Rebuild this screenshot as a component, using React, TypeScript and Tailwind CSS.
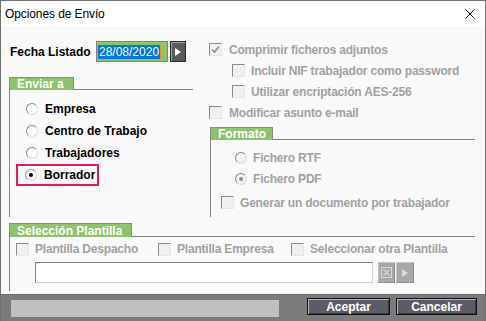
import React from 'react';

const GRAY = 'text-[#a0a0a0] tracking-[-0.2px]';

function Radio({ checked = false, disabled = false }: { checked?: boolean; disabled?: boolean }) {
  return (
    <span
      className={`flex h-[12px] w-[12px] shrink-0 items-center justify-center rounded-full border border-[#8a8a8a] border-b-[#dcdcdc] border-r-[#dcdcdc] ${
        disabled ? 'bg-[#f0f0f0]' : 'bg-white'
      }`}
    >
      {checked && <span className={`h-[4px] w-[4px] rounded-full ${disabled ? 'bg-[#909090]' : 'bg-black'}`} />}
    </span>
  );
}

function Check({ checked = false }: { checked?: boolean }) {
  return (
    <span className="flex h-[13px] w-[13px] shrink-0 items-center justify-center border border-[#8a8a8a] border-b-[#e6e6e6] border-r-[#e6e6e6] bg-[#f0f0f0]">
      {checked && (
        <svg width="9" height="9" viewBox="0 0 9 9">
          <path d="M1 4.5 L3.5 7 L8 1.5" fill="none" stroke="#8a8a8a" strokeWidth="1.6" />
        </svg>
      )}
    </span>
  );
}

function Tab({ label, w, h }: { label: string; w: string; h: string }) {
  return (
    <div className={`flex ${h}`}>
      <div
        className={`${w} flex items-center border border-b-0 border-[#8a8a8a] bg-[#8bc46b] pl-[7px] font-bold leading-none text-white`}
      >
        {label}
      </div>
      <div className="flex-1 border-b border-[#808080]" />
    </div>
  );
}

export default function App() {
  return (
    <div className="h-[321px] w-[486px] overflow-hidden bg-[#f9f9f9] font-['Liberation_Sans',Arial,sans-serif] text-[12px]">
      <div className="flex h-full w-full flex-col border-l border-r border-t border-[#707070]">
        {/* Title bar */}
        <div className="flex h-[25px] shrink-0 items-center justify-between bg-white pl-[4px] pr-[10px]">
          <span className="text-[12px] tracking-[-0.1px] text-black">Opciones de Envío</span>
          <svg width="10" height="10" viewBox="0 0 10 10">
            <path d="M0.5 0.5 L9.5 9.5 M9.5 0.5 L0.5 9.5" stroke="#111" strokeWidth="1" />
          </svg>
        </div>

        {/* Body */}
        <div className="flex flex-1 flex-col pl-[8px]">
          <div className="flex h-[191px]">
            {/* Left column */}
            <div className="flex w-[184px] flex-col pt-[15px]">
              <div className="flex h-[21px] items-center pl-[1px]">
                <span className="w-[86px] font-bold text-black">Fecha Listado</span>
                <div className="flex h-[21px] w-[72px] items-center border border-[#808080] bg-[#8bc46b] pl-[1px]">
                  <span className="bg-[#0078d7] px-[1px] leading-[14px] text-white">28/08/2020</span>
                  <span className="h-[14px] w-[1px] bg-[#ff8c00]" />
                </div>
                <div className="ml-[2px] flex h-[21px] w-[16px] items-center justify-center border border-[#2a2a2a] bg-[#5a5a5e] shadow-[inset_1px_1px_0_#a0a0a4]">
                  <svg width="6" height="8" viewBox="0 0 6 8">
                    <path d="M0 0 L6 4 L0 8 Z" fill="#fff" />
                  </svg>
                </div>
              </div>

              <div className="mt-[15px] flex flex-1 flex-col">
                <Tab label="Enviar a" w="w-[65px]" h="h-[13px]" />
                <div className="flex flex-1 flex-col border-l border-[#808080] pt-[8px]">
                  {['Empresa', 'Centro de Trabajo', 'Trabajadores'].map((t) => (
                    <div key={t} className="flex h-[22px] items-center gap-[7px] pl-[16px]">
                      <Radio />
                      <span className="font-bold text-black">{t}</span>
                    </div>
                  ))}
                  <div className="flex h-[22px] items-center pl-[6px]">
                    <div className="flex h-[22px] w-[83px] items-center gap-[7px] border-2 border-[#e8175d] pl-[7px]">
                      <Radio checked />
                      <span className="font-bold text-black">Borrador</span>
                    </div>
                  </div>
                </div>
              </div>
            </div>

            {/* Right column */}
            <div className={`ml-[16px] flex w-[266px] flex-col pt-[13px] font-bold ${GRAY}`}>
              <div className="flex h-[21px] items-center gap-[7px]">
                <Check checked />
                <span>Comprimir ficheros adjuntos</span>
              </div>
              <div className="flex h-[21px] items-center gap-[6px] pl-[23px]">
                <Check />
                <span>Incluir NIF trabajador como password</span>
              </div>
              <div className="flex h-[21px] items-center gap-[6px] pl-[23px]">
                <Check />
                <span>Utilizar encriptación AES-256</span>
              </div>
              <div className="flex h-[21px] items-center gap-[7px]">
                <Check />
                <span>Modificar asunto e-mail</span>
              </div>

              <div className="ml-[1px] mt-[4px] flex flex-1 flex-col tracking-normal">
                <Tab label="Formato" w="w-[63px]" h="h-[13px]" />
                <div className={`flex flex-1 flex-col border-l border-[#808080] pt-[7px] ${GRAY}`}>
                  <div className="flex h-[21px] items-center gap-[6px] pl-[24px]">
                    <Radio disabled />
                    <span>Fichero RTF</span>
                  </div>
                  <div className="flex h-[21px] items-center gap-[6px] pl-[24px]">
                    <Radio checked disabled />
                    <span>Fichero PDF</span>
                  </div>
                  <div className="mt-[3px] flex h-[21px] items-center gap-[6px] pl-[10px]">
                    <Check />
                    <span>Generar un documento por trabajador</span>
                  </div>
                </div>
              </div>
            </div>
          </div>

          {/* Selección Plantilla */}
          <div className="mt-[6px] flex w-[466px] flex-col">
            <Tab label="Selección Plantilla" w="w-[123px]" h="h-[14px]" />
            <div className={`flex flex-col border-l border-[#808080] pb-[8px] pt-[1px] font-bold ${GRAY}`}>
              <div className="flex h-[22px] items-center pl-[6px]">
                <div className="flex w-[142px] items-center gap-[6px]">
                  <Check />
                  <span>Plantilla Despacho</span>
                </div>
                <div className="flex w-[133px] items-center gap-[6px]">
                  <Check />
                  <span>Plantilla Empresa</span>
                </div>
                <div className="flex items-center gap-[6px]">
                  <Check />
                  <span>Seleccionar otra Plantilla</span>
                </div>
              </div>
              <div className="mt-[2px] flex h-[21px] items-center pl-[25px]">
                <div className="h-[21px] w-[338px] border border-[#808080] border-b-[#d0d0d0] border-r-[#d0d0d0] bg-white" />
                <div className="ml-[5px] flex h-[21px] w-[17px] items-center justify-center border border-[#c4c4c4] border-b-[#8c8c8c] border-r-[#8c8c8c] bg-[#a8a8a8]">
                  <svg width="11" height="11" viewBox="0 0 11 11">
                    <rect x="0.5" y="0.5" width="10" height="10" fill="none" stroke="#d8d8d8" />
                    <path d="M2.5 2.5 L8.5 8.5 M8.5 2.5 L2.5 8.5" stroke="#d8d8d8" strokeWidth="1.2" />
                  </svg>
                </div>
                <div className="ml-[1px] flex h-[21px] w-[18px] items-center justify-center border border-[#c4c4c4] border-b-[#8c8c8c] border-r-[#8c8c8c] bg-[#a8a8a8]">
                  <svg width="6" height="8" viewBox="0 0 6 8">
                    <path d="M0 0 L6 4 L0 8 Z" fill="#dcdcdc" />
                  </svg>
                </div>
              </div>
            </div>
          </div>
        </div>

        {/* Footer */}
        <div className="mt-[3px] flex h-[27px] shrink-0 items-start border-t border-[#6a6a6a] bg-[#7b7b7b] pl-[10px] pr-[8px]">
          <div className="mt-[5px] h-[17px] w-[268px] bg-[#c0c0c0]" />
          <button className="ml-auto mt-[3px] flex h-[17px] w-[83px] items-center justify-center border border-[#111] bg-[#5c5c68] font-bold text-white shadow-[inset_1px_1px_0_#b4b4bc,inset_-1px_-1px_0_#3a3a44]">
            Aceptar
          </button>
          <button className="ml-[6px] mt-[3px] flex h-[17px] w-[81px] items-center justify-center border border-[#111] bg-[#5c5c68] font-bold text-white shadow-[inset_1px_1px_0_#b4b4bc,inset_-1px_-1px_0_#3a3a44]">
            Cancelar
          </button>
        </div>
      </div>
    </div>
  );
}
